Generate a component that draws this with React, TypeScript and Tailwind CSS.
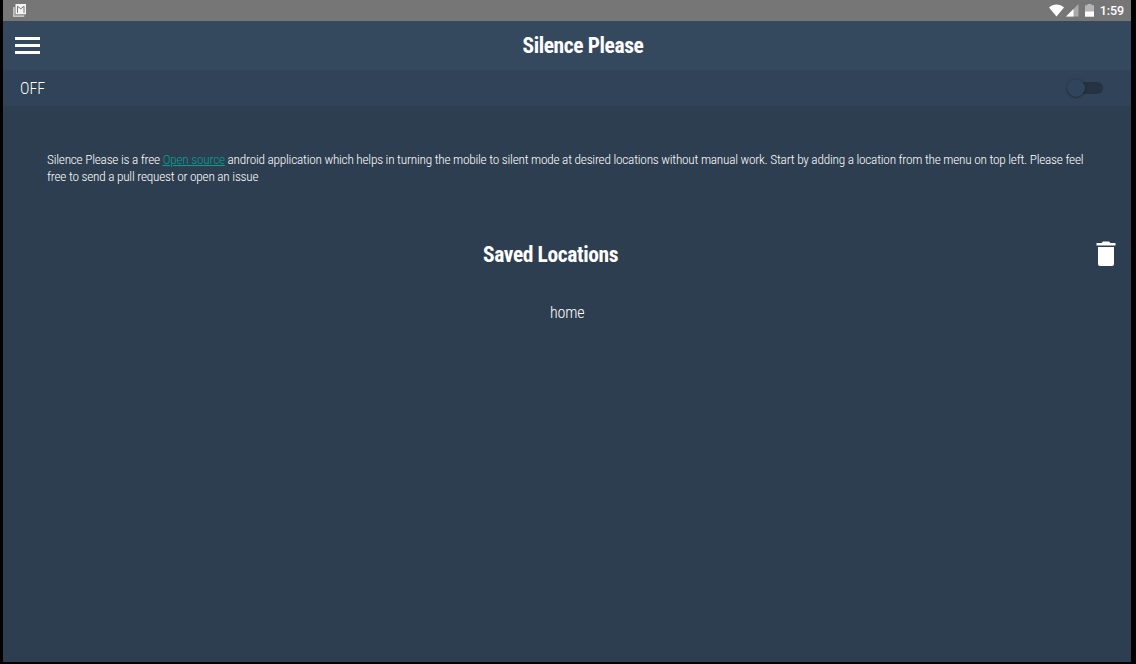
function StatusBar() {
  return (
    <div className="flex h-[21px] shrink-0 items-center bg-[#767676] pr-[7px] pl-[10px]">
      <svg className="h-[13px] w-[14px]" viewBox="0 0 14 13">
        <path d="M0 3h1.700v8.300h9.600V13H0z" fill="#c4c4c4" />
        <path d="M2.500 0H13v10.300H2.500z" fill="#f4f4f4" />
        <path d="M4.500 8.800V2.200L7.750 4.800 11 2.200v6.600" fill="none" stroke="#777" strokeWidth="1" />
      </svg>
      <div className="ml-auto flex items-center">
        <svg className="h-[13px] w-[15px]" viewBox="0 0 15 13">
          <path d="M0 3.500C4-.4 11-.4 15 3.500L7.500 12.500z" fill="#fff" />
        </svg>
        <svg className="ml-[2px] h-[13px] w-[13px]" viewBox="0 0 13 13">
          <path d="M0 12.500L12.500 0v12.500z" fill="#aaa" />
          <path d="M0 12.500L7.500 5v7.500z" fill="#fff" />
        </svg>
        <svg className="ml-[6px] h-[13px] w-[9px]" viewBox="0 0 9 13">
          <path d="M2.500 0h4v1.300H9V8H0V1.300h2.500z" fill="#b5b5b5" />
          <path d="M0 7.500h9V12.700H0z" fill="#fff" />
        </svg>
        <span className="ml-[6px] font-[Roboto,sans-serif] text-[12.5px] leading-[21px] font-medium tracking-[-0.1px] text-white [font-stretch:100%]">1:59</span>
      </div>
    </div>
  );
}

export default function App() {
  return (
    <div className="h-[664px] w-[1136px] overflow-hidden bg-black pr-[5px] pb-[2px] pl-[3px] font-['Roboto_Condensed',Roboto,sans-serif] text-white [font-stretch:75%]">
      <div className="flex h-full flex-col bg-[#2d3e50]">
        <StatusBar />
        <header className="grid h-[49px] shrink-0 grid-cols-[24px_1fr] items-center bg-[#35495e] pl-[12px]">
          <button aria-label="Menu" className="flex w-[25px] flex-col gap-[4px]">
            <span className="h-[3px] bg-white" />
            <span className="h-[3px] bg-white" />
            <span className="h-[3px] bg-white" />
          </button>
          <h1 className="pb-[1px] pl-[483.500px] text-[21.500px] leading-[47px] font-bold tracking-[-0.4px]">Silence Please</h1>
        </header>
        <div className="flex h-[36px] shrink-0 items-center justify-between bg-[#314358] pr-[28px] pl-[17px]">
          <span className="pt-[2px] text-[16px] leading-[34px] font-light">OFF</span>
          <button aria-label="Silence mode" className="relative h-[18px] w-[36px]">
            <span className="absolute top-[3px] right-0 h-[12px] w-[32px] rounded-full bg-[#253243]" />
            <span className="absolute top-0 left-0 h-[18px] w-[18px] rounded-full bg-[#30445b] shadow-[0_0.5px_2px_rgba(0,0,0,0.5)]" />
          </button>
        </div>
        <main className="flex-1 pt-[45px]">
          <p className="ml-[44px] text-[13.300px] leading-[17px] font-light tracking-[-0.235px]">
            Silence Please is a free <a className="text-[#06a08e] underline">Open source</a> android application which helps in turning the mobile to silent mode at desired locations without manual work. Start by adding a location from the menu on top left. Please feel
            <br />
            free to send a pull request or open an issue
          </p>
          <div className="mt-[54px] flex h-[30px] items-center justify-between pr-[15px] pl-[480px]">
            <h2 className="pt-[2px] text-[21.500px] leading-[30px] font-bold tracking-[-0.400px]">Saved Locations</h2>
            <svg className="h-[26px] w-[20px]" viewBox="0 0 20 26">
              <path d="M.5 2h5L7 .5h6L14.500 2h5v2.500H.5zM2 6h16v17a2 2 0 0 1-2 2H4a2 2 0 0 1-2-2z" fill="#fff" />
            </svg>
          </div>
          <div className="mt-[34px] pl-[547px] text-[16px] leading-[20px] font-light tracking-[-0.200px]">home</div>
        </main>
      </div>
    </div>
  );
}
